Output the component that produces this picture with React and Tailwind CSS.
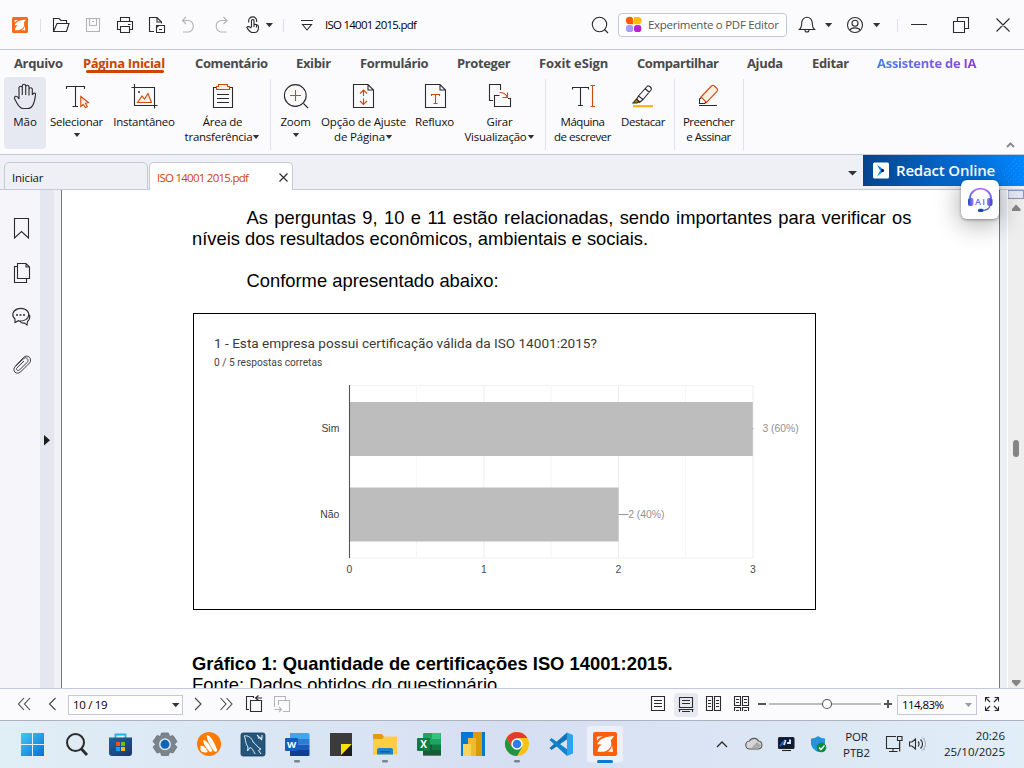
import React from "react";

/* Inline drawing whose box is given as [left, top, right, bottom]. */
function Ico({ b, c = "#2b2b2b", w = 1.1, children }) {
  const [x0, y0, x1, y1] = b;
  return (
    <svg
      className="block shrink-0"
      width={x1 - x0}
      height={y1 - y0}
      viewBox={`${x0} ${y0} ${x1 - x0} ${y1 - y0}`}
      fill="none"
      stroke={c}
      strokeWidth={w}
    >
      {children}
    </svg>
  );
}

const FoxitMark = () => (
  <g fill="#fff" stroke="none">
    <path d="M26 19.800C21 19.800 16 21.500 14.800 25.200L17.800 25.300C16 26.500 15.200 28 15 30.200H18.500C22.800 29.800 25.200 26 23.800 22.600Z" />
    <path d="M24.600 25.800C24.400 28 23.200 29.400 21.600 30.200H25.400Z" />
    <path d="M14.600 20H18.600C16.600 20.600 15.200 21.500 14.600 23Z" />
  </g>
);

function TitleBar() {
  return (
    <header className="flex h-[50px] shrink-0 items-center border-b border-[#c3c9dc]">
      <Ico b={[0, 0, 46, 49]}>
        <rect x="12" y="17" width="16" height="16" rx="1.500" fill="#f76b1c" stroke="none" />
        <FoxitMark />
        <path d="M40.500 19V32" stroke="#dfe1e8" />
      </Ico>
      <Ico b={[46, 0, 78, 49]}>
        <path d="M53.500 31.500V18.500H59L61 20.500H66.500V23.500M53.500 31.500L57 23.500H69L66.500 31.500Z" />
      </Ico>
      <Ico b={[78, 0, 108, 49]} c="#b3b3b3">
        <path d="M86.500 18.500H99.500V31.500H86.500ZM89.500 18.500V25.500H96.500V18.500M94 21.500H92" />
      </Ico>
      <Ico b={[108, 0, 141, 49]}>
        <path d="M120.500 21.500V17.500H129.500V21.500M120.500 29.500H117.500V21.500H132.500V29.500H129.500M120.500 26.500H129.500V32.500H120.500ZM128 24.500H130.500" />
      </Ico>
      <Ico b={[141, 0, 174, 49]}>
        <path d="M154 31.500H149.500V17.500H157L161.500 22V23.500M157 17.500V22H161.500M156.500 25.500H164.500V32.500H156.500ZM156.500 27.500L158.500 25.500M159 29.500H162" />
      </Ico>
      <Ico b={[174, 0, 205, 49]} c="#b3b3b3">
        <path d="M186 17L182.500 20.500L186 24M182.500 20.500H189A6 6 0 0 1 189 32H183" />
      </Ico>
      <Ico b={[205, 0, 237, 49]} c="#b3b3b3">
        <path d="M223.500 17L227 20.500L223.500 24M227 20.500H220.500A6 6 0 0 0 220.500 32H226.500" />
      </Ico>
      <Ico b={[237, 0, 290, 49]}>
        <path d="M251.500 27V20.500A1.300 1.300 0 0 1 254 20.500V24.500C256 24 258.500 25 258.500 27C258.500 29.500 257.500 32.500 254.500 32.500H252C250 32.500 248.500 30 246.800 27.500C247.500 26 249.500 26.500 251.500 28M249 22.500A4 4 0 1 1 256.500 22M254 24.500V27M256.500 25V27.500" />
        <path d="M265.800 23H273L269.400 27.200Z" fill="#333" stroke="none" />
        <path d="M283.500 19V32" stroke="#dfe1e8" />
      </Ico>
      <Ico b={[290, 0, 325, 49]}>
        <path d="M301 20.500H313M302.500 24.500L307 30L311.500 24.500Z" />
      </Ico>
      <span className="w-[260px] whitespace-nowrap text-[11.500px] leading-[16px] tracking-[-0.750px] text-black">ISO 14001 2015.pdf</span>
      <Ico b={[585, 0, 618, 49]}>
        <circle cx="599.500" cy="24.500" r="7.200" />
        <path d="M604.500 29.500L608 33" />
      </Ico>
      <div className="flex h-6 w-[169px] items-center rounded-[4px] border border-[#c3c9dc] bg-white">
        <Ico b={[619, 15, 648, 35]}>
          <path d="M626 20.500A3.500 3.500 0 0 1 633.300 20.500V24.300H629.500A3.700 3.700 0 0 1 626 20.500Z" fill="#ff5a00" stroke="none" />
          <path d="M634 17H638A3.500 3.500 0 0 1 638 24.300H634Z" fill="#ffbc0a" stroke="none" />
          <rect x="626" y="25" width="7.300" height="7" rx="2.800" fill="#a99cff" stroke="none" />
          <rect x="634" y="25" width="7.300" height="7" rx="2.800" fill="#bb22d6" stroke="none" />
        </Ico>
        <span className="whitespace-nowrap text-[11.500px] leading-[16px] tracking-[-0.280px] text-[#555]">Experimente o PDF Editor</span>
      </div>
      <Ico b={[787, 0, 840, 49]}>
        <path d="M799.500 29.500C802 27.500 801.500 25 801.800 22.500A5.200 5.200 0 0 1 812.200 22.500C812.500 25 812 27.500 814.500 29.500ZM805 30A2 2 0 0 0 809 30M807 17.500V16.800" />
        <path d="M825 23H832.200L828.600 27.200Z" fill="#333" stroke="none" />
      </Ico>
      <Ico b={[840, 0, 904, 49]}>
        <circle cx="855" cy="25" r="7.500" />
        <circle cx="855" cy="23.200" r="3" />
        <path d="M850 30.300C851 27 859 27 860 30.300" />
        <path d="M873 23H880.200L876.600 27.200Z" fill="#333" stroke="none" />
        <path d="M897.500 19V32" stroke="#dfe1e8" />
      </Ico>
      <Ico b={[904, 0, 1024, 49]}>
        <path d="M911 24.500H927M953.500 21.500H964.500V32.500H953.500ZM957.500 21.500V17.500H968.500V28.500H964.500M996.500 18.500L1009.500 31.500M1009.500 18.500L996.500 31.500" />
      </Ico>
    </header>
  );
}

const MENU = [
  ["Arquivo", "w-[49px] ml-[14px]"],
  ["Página Inicial", "w-[82px] ml-[20px] text-[#cc4400] tracking-[-0.330px]"],
  ["Comentário", "w-[72px] ml-[30px] tracking-[-0.400px]"],
  ["Exibir", "w-[35px] ml-[29px]"],
  ["Formulário", "w-[68px] ml-[29px] tracking-[-0.400px]"],
  ["Proteger", "w-[53px] ml-[29px] tracking-[-0.400px]"],
  ["Foxit eSign", "w-[69px] ml-[29px] tracking-[-0.100px]"],
  ["Compartilhar", "w-[81px] ml-[29px] tracking-[-0.450px]"],
  ["Ajuda", "w-[36px] ml-[29px]"],
  ["Editar", "w-[36px] ml-[29px]"],
];

function MenuBar() {
  return (
    <nav className="flex h-[27px] shrink-0 text-[13px] font-bold leading-[26px] tracking-[-0.350px] text-[#4a4a4a]">
      {MENU.map(([label, cls], i) => (
        <div key={label} className={`flex shrink-0 flex-col whitespace-nowrap ${cls}`}>
          <span className="h-5">{label}</span>
          {i === 1 && <span className="ml-[3px] h-[3px] w-[78px] rounded-full bg-[#cc4400]" />}
        </div>
      ))}
      <span className="ml-[29px] h-[26px] w-[100px] whitespace-nowrap bg-linear-to-r from-[#3f7df0] to-[#8a3fd8] bg-clip-text tracking-[-0.270px] text-transparent">Assistente de IA</span>
    </nav>
  );
}

function Caret() {
  return (
    <svg className="inline-block" width="8" height="6" viewBox="0 0 8 6">
      <path d="M0.800 1H7.200L4 5Z" fill="#333" />
    </svg>
  );
}

function Tool({ x, cls, l1, l2, caret, active, children }) {
  return (
    <div className={`flex h-[72px] shrink-0 flex-col items-center rounded-[4px] text-[11.500px] leading-[15px] text-[#111] ${active ? "bg-[#e6e9f1]" : ""} ${cls}`}>
      <Ico b={[x[0], 77, x[1], 114]}>{children}</Ico>
      <span className="h-[15px] whitespace-nowrap">{l1}</span>
      <span className={`flex h-[15px] items-center whitespace-nowrap ${l2 ? "" : "-mt-[2px]"}`}>
        {l2}
        {caret && <Caret />}
      </span>
    </div>
  );
}

const Sep = ({ cls }) => <div className={`mt-[2px] h-[71px] w-px shrink-0 bg-[#e0e2ea] ${cls}`} />;

function Ribbon() {
  const o = "#cc4a0a";
  return (
    <div className="flex h-[78px] shrink-0 border-b border-[#c3c9dc]">
      <Tool x={[4, 46]} cls="ml-[4px] w-[42px]" l1="Mão" active>
        <path d="M19 99V87.500A1.700 1.700 0 0 1 22.300 87.500V95M22.300 95V86A1.700 1.700 0 0 1 25.700 86V95M25.700 95V86.500A1.700 1.700 0 0 1 29 86.500V95.500M29 95.500V89A1.700 1.700 0 0 1 32.300 89V95M32.300 95C33 92.500 36 92.500 35.500 95C35 99 34 108.500 28 108.500H23C19 108.500 17 103 14.500 98.500C14 96 17 95 19 99" />
      </Tool>
      <Tool x={[50, 103]} cls="ml-[4px] w-[53px] tracking-[-0.250px]" l1="Selecionar" caret>
        <path d="M66.500 89V86.500H84.500V89M75.500 86.500V106.500M72.500 106.500H78" />
        <path d="M80.800 96.500V106.500L83.300 104.500L85.500 107.700L87.300 106.500L85.500 103.300L88.500 102.500Z" stroke={o} fill="#fdeee4" />
      </Tool>
      <Tool x={[113, 175]} cls="ml-[10px] w-[62px] tracking-[-0.250px]" l1="Instantâneo">
        <path d="M134.500 84V105.500H157.500M131.500 87.500H154.500V108.500" />
        <path d="M137.500 102.500L142 96L144.500 99L148 93.500L151.500 102.500Z" stroke={o} fill="#fdeee4" />
        <circle cx="139" cy="92" r="1" fill="#2b2b2b" stroke="none" />
      </Tool>
      <Tool x={[185, 260]} cls="ml-[10px] w-[75px] tracking-[-0.250px]" l1="Área de" l2="transferência" caret>
        <path d="M216.500 87.500H213.500V107.500H232.500V87.500H229.500M217 94.500H229M217 98.500H229M217 102.500H229" />
        <path d="M216.500 89.500V86.500H218.500V84.500H227.500V86.500H229.500V89.500Z" stroke={o} fill="#fdeee4" />
      </Tool>
      <Sep cls="ml-[10px]" />
      <Tool x={[281, 310]} cls="ml-[10px] w-[29px] tracking-[-0.250px]" l1="Zoom" caret>
        <circle cx="295.300" cy="95.500" r="10.900" />
        <path d="M303.500 103.500L308 108" />
        <path d="M290 95.500H301M295.500 90V101" stroke={o} />
      </Tool>
      <Tool x={[321, 406]} cls="ml-[11px] w-[85px] tracking-[-0.170px]" l1="Opção de Ajuste" l2="de Página" caret>
        <path d="M353.500 84.500H368L373.500 90V107.500H353.500ZM368 84.500V90H373.500" />
        <path d="M363.500 90.500V96M363.500 98.500V104M360 93.500L363.500 90L367 93.500M360 101L363.500 104.500L367 101" stroke={o} />
      </Tool>
      <Tool x={[415, 454]} cls="ml-[9px] w-[39px] tracking-[-0.200px]" l1="Refluxo">
        <path d="M425.500 84.500H440L445.500 90V107.500H425.500ZM440 84.500V90H445.500" />
        <path d="M431.500 96V94.500H439.500V96M435.500 94.500V103.500M433.500 103.500H437.500" stroke={o} />
      </Tool>
      <Tool x={[464, 535]} cls="ml-[10px] w-[71px] tracking-[-0.250px]" l1="Girar" l2="Visualização" caret>
        <path d="M493 100.500H489.500V84.500H500.500V90M499.500 95.500H494.500V106.500H510.500V98.500H508" />
        <path d="M499.500 92.500C503 92.500 506 94 507 97M507.500 92.500V97.500H502.500" stroke={o} />
      </Tool>
      <Sep cls="ml-[10px]" />
      <Tool x={[554, 611]} cls="ml-[8px] w-[57px] tracking-[-0.450px]" l1="Máquina" l2="de escrever">
        <path d="M572.500 89.500V87.500H588.500V89.500M580.500 87.500V105.500M578 105.500H583" />
        <path d="M590.500 85.500H595M592.500 85.500V106.500M590.500 106.500H595" stroke={o} />
      </Tool>
      <Tool x={[621, 665]} cls="ml-[10px] w-[44px] tracking-[-0.450px]" l1="Destacar">
        <path d="M638.500 96L647 86.500C648.500 84.500 652.500 88 651 90L643 99.500ZM638.500 96L636.500 99.500L639.500 102.500L643 99.500M645 88.500L649.500 92.500" />
        <path d="M636.500 99L633 103H637L639.200 101.500Z" fill="#b87a18" />
        <path d="M633 106.200H653" stroke="#fbad0f" strokeWidth="2" />
      </Tool>
      <Sep cls="ml-[9px]" />
      <Tool x={[683, 734]} cls="ml-[8px] w-[51px] tracking-[-0.450px]" l1="Preencher" l2="e Assinar">
        <path d="M701.500 97.500L699.500 99V103.500H704.500L706.500 102M699 105.500H717" />
        <path d="M701 97L711.500 86C713 84.500 714 85.300 717 88.500C718 89.500 717.800 90.500 717 91.500L706.500 102.500Z" stroke={o} fill="#fdeee4" />
      </Tool>
      <Sep cls="ml-[9px]" />
      <div className="flex flex-1 items-end justify-end">
        <Ico b={[1000, 137, 1024, 154]} c="#8a8a8a" w={2}>
          <path d="M1007 147L1010.500 143.500L1014 147" />
        </Ico>
      </div>
    </div>
  );
}

function TabStrip() {
  return (
    <div className="relative flex h-[35px] shrink-0 items-end bg-[#eff0f5]">
      <div className="h-[35px] w-[4px] border-b border-[#c3c9dc]" />
      <div className="flex h-[28px] w-[144px] items-center rounded-t-[5px] border border-[#c3c9dc] pl-[7px] pt-1 text-[11.500px] leading-4 tracking-[-0.200px] text-[#111]">Iniciar</div>
      <div className="h-px w-px bg-[#c3c9dc]" />
      <div className="flex h-[28px] w-[144px] items-center justify-between rounded-t-[5px] border border-b-0 border-[#c3c9dc] bg-white pl-[7px] pt-1 text-[11.500px] leading-4 text-[#cc4400]">
        <span className="-mt-px tracking-[-0.750px]">ISO 14001 2015.pdf</span>
        <Ico b={[276, 170, 292, 188]}>
          <path d="M279.500 173.500L287.500 181.500M287.500 173.500L279.500 181.500" />
        </Ico>
      </div>
      <div className="flex h-[35px] flex-1 justify-end border-b border-[#c3c9dc]">
        <Ico b={[843, 155, 863, 189]}>
          <path d="M848 171H857L852.500 175.500Z" fill="#333" stroke="none" />
        </Ico>
        <div className="flex h-[31px] w-[161px] items-center bg-linear-to-r from-[#04448d] to-[#0086ff]">
          <Ico b={[863, 155, 896, 186]}>
            <rect x="873" y="162.500" width="16" height="16" rx="1.500" fill="#fff" stroke="none" />
            <path d="M877 164.500L884.500 170.500H880Z" fill="#0a7cf5" stroke="none" />
            <path d="M880 170.500H884.500L877 176.500Z" fill="#0b9bf5" stroke="none" />
            <circle cx="882.500" cy="170.500" r="1.500" fill="#111" stroke="none" />
          </Ico>
          <span className="w-[104px] whitespace-nowrap text-[15px] font-semibold tracking-[-0.180px] text-white">Redact Online</span>
          <Ico b={[1000, 155, 1024, 186]} c="#4db0ff" w={0.8}>
            <g strokeDasharray="1 2.500" opacity="0.800">
              <path d="M1004 176L1024 156M1006 179L1024 161M1008 182L1024 166M1013 182L1024 171M1018 182L1024 176M1003 172L1016 159" />
            </g>
          </Ico>
        </div>
      </div>
      <div className="absolute right-[25px] top-[25px] z-10 flex h-[39px] w-[38px] items-center justify-center rounded-[6px] bg-white shadow-[0_4px_24px_2px_rgba(0,0,0,0.300),0_1px_3px_0px_rgba(0,0,0,0.350)]">
        <svg width="26" height="28" viewBox="968 186 26 28" fill="none">
          <defs>
            <linearGradient id="arc" x1="0" y1="0" x2="0" y2="1">
              <stop offset="0" stopColor="#b86cf8" />
              <stop offset="1" stopColor="#4a6be8" />
            </linearGradient>
            <linearGradient id="ear" x1="0" y1="0" x2="1" y2="0">
              <stop offset="0" stopColor="#1d49c4" />
              <stop offset="1" stopColor="#a877fb" />
            </linearGradient>
            <linearGradient id="ear2" x1="1" y1="0" x2="0" y2="0">
              <stop offset="0" stopColor="#1d49c4" />
              <stop offset="1" stopColor="#a877fb" />
            </linearGradient>
          </defs>
          <path d="M971 198C972 185.500 991 185.500 992 198" stroke="url(#arc)" strokeWidth="1.900" />
          <rect x="969" y="198" width="5.500" height="8" rx="2" fill="url(#ear)" />
          <rect x="988" y="198" width="5.500" height="8" rx="2" fill="url(#ear2)" />
          <path d="M991 206C990 209 987 210.500 983 210.500" stroke="#3a62d6" strokeWidth="1.200" />
          <rect x="979" y="208.800" width="5.500" height="3.200" rx="1.500" fill="#1749b8" />
          <text x="976" y="205" fontFamily="Open Sans, sans-serif" fontSize="9" fontWeight="600" letterSpacing="1.300" fill="#6a63ee">AI</text>
        </svg>
      </div>
    </div>
  );
}

function Chart() {
  const t = { fontFamily: "Liberation Sans, Arial, sans-serif", fontSize: 10.4, stroke: "none" };
  return (
    <Ico b={[194, 369, 815, 608]}>
      <path d="M416.500 385V558M551 385V558M685.500 385V558" stroke="#f6f6f6" />
      <path d="M483.900 385V558M618.400 385V558M349.500 385.500H753M349.500 558H753M753 385V558.500" stroke="#efefef" />
      <rect x="350" y="402" width="402.800" height="54" fill="#bdbdbd" stroke="none" />
      <rect x="350" y="487.500" width="268.600" height="54" fill="#bdbdbd" stroke="none" />
      <path d="M349.500 385V558" stroke="#555" />
      <path d="M618.500 514.500H628.500" stroke="#999" />
      <path d="M752.500 428.700H753.500" stroke="#999" />
      <g {...t} fill="#3c3c3c" textAnchor="end">
        <text x="339.300" y="432.200">Sim</text>
        <text x="339.300" y="518.200">Não</text>
      </g>
      <g {...t} fill="#929292">
        <text x="762.400" y="432.200">3 (60%)</text>
        <text x="628.200" y="518">2 (40%)</text>
      </g>
      <g {...t} fill="#4a4a4a" textAnchor="middle">
        <text x="349.500" y="572.800">0</text>
        <text x="483.900" y="572.800">1</text>
        <text x="618.400" y="572.800">2</text>
        <text x="752.800" y="572.800">3</text>
      </g>
    </Ico>
  );
}

function Sidebar() {
  return (
    <aside className="flex w-[61px] shrink-0 bg-[#f0f1f5]">
      <div className="w-[40px] bg-[#f5f5fa]">
        <Ico b={[0, 190, 40, 250]}>
          <path d="M14.500 218.500H28.500V238L21.500 231.500L14.500 238Z" />
        </Ico>
        <Ico b={[0, 250, 40, 295]}>
          <path d="M17.500 263.500H26L29.500 267V278.500H17.500ZM26 263.500V267H29.500M17.500 266.500H14.500V282.500H26.500V278.500" />
        </Ico>
        <Ico b={[0, 295, 40, 340]}>
          <path d="M15 322.500L15 319A8 6.300 0 1 1 18.500 320.700ZM28.500 313.500C31 316.500 29.500 320 27.500 321.500L27 325L24.500 323C22 323.500 20.500 322.500 19.500 321" />
          <path d="M16 315H18M19.500 315H21.500M23 315H25" strokeWidth="1.600" />
        </Ico>
        <Ico b={[0, 340, 40, 400]} c="#3a3a3a" w={1}>
          <path d="M15.500 366L23.500 357.500C27.500 353.500 33 359 29.500 363L20.500 372C16.500 375.500 11.500 370.500 15.200 366.500L23.800 358.500C26.500 356.500 29.500 360 27.200 362.300L19.500 370C17.500 371.500 15.500 369.500 17 367.800L24 361" />
        </Ico>
      </div>
      <div className="flex w-[14px] bg-[#e4e7f0]">
        <Ico b={[40, 190, 54, 460]}>
          <path d="M44 435V445.500L50 440.200Z" fill="#1c1c1c" stroke="none" />
        </Ico>
      </div>
    </aside>
  );
}

function Document() {
  return (
    <main className="flex min-h-0 flex-1 bg-white">
      <Sidebar />
      <div className="h-full w-[939px] shrink-0 overflow-hidden border-x border-[#777] bg-white pl-[130px] font-['Liberation_Sans',Arial,sans-serif] text-[18.370px] leading-[21px] text-black">
        <p className="mt-[17px] w-[719.500px] indent-[54.500px] text-justify">
          As perguntas 9, 10 e 11 estão relacionadas, sendo importantes para verificar os níveis dos resultados econômicos, ambientais e sociais.
        </p>
        <p className="mt-[21px] indent-[54.500px]">Conforme apresentado abaixo:</p>
        <figure className="ml-[1px] mt-[22px] flex h-[297px] w-[623px] flex-col border border-black">
          <div className="flex h-[55px] flex-col pl-[20px] pt-[20px] font-['Roboto',sans-serif]">
            <span className="h-[21px] text-[13.600px] leading-[19px] text-[#3a3a3a]">1 - Esta empresa possui certificação válida da ISO 14001:2015?</span>
            <span className="h-[14px] text-[10.200px] leading-[16px] text-[#444]">0 / 5 respostas corretas</span>
          </div>
          <Chart />
        </figure>
        <p className="mt-[43px] font-bold">Gráfico 1: Quantidade de certificações ISO 14001:2015.</p>
        <p>Fonte: Dados obtidos do questionário.</p>
      </div>
      <div className="w-[7px] bg-[#eeeff5]" />
      <div className="flex w-[17px] flex-col border-l border-white bg-[#eeeeee]">
        <Ico b={[1008, 190, 1024, 688]}>
          <rect x="1008" y="190.500" width="15.500" height="8" fill="#e6e9f4" stroke="#8d97b4" />
          <path d="M1012 211V209L1016 204.500L1020.500 209V211Z" fill="#858585" stroke="none" />
          <rect x="1013" y="440" width="6" height="17" rx="3" fill="#858585" stroke="none" />
          <path d="M1012 680H1020.500V682L1016.200 686.500L1012 682Z" fill="#858585" stroke="none" />
        </Ico>
      </div>
    </main>
  );
}

function StatusBar() {
  return (
    <footer className="flex h-[33px] shrink-0 items-center border-b border-t border-b-[#aeb2be] border-t-[#c3c9dc] bg-[#fbfafd] text-[12px] leading-4 text-black">
      <Ico b={[0, 689, 68, 720]} c="#444">
        <path d="M24 698L18.500 704L24 710M30 698L24.500 704L30 710M55.500 698L49.500 704L55.500 710" />
      </Ico>
      <div className="flex h-5 w-[115px] items-center justify-between border border-[#c3c9dc] bg-white pl-1">
        <span className="text-[11.500px] tracking-[-0.300px]">10 / 19</span>
        <Ico b={[168, 696, 182, 712]}>
          <path d="M172 702H179.500L175.700 706.200Z" fill="#333" stroke="none" />
        </Ico>
      </div>
      <Ico b={[183, 689, 240, 720]} c="#444">
        <path d="M195 698L201 704L195 710M220.500 698L226 704L220.500 710M226.500 698L232 704L226.500 710" />
      </Ico>
      <Ico b={[240, 689, 268, 720]}>
        <path d="M249 709.500H246.500V696.500H253.500V698M250.500 700.500H261.500V711.500H250.500ZM262 698H255.500M258.500 695.500L255.500 698L258.500 700.500" />
      </Ico>
      <Ico b={[268, 689, 300, 720]} c="#b5b5b5">
        <path d="M274.500 707V696.500H285.500V700.500M278.500 705V700.500H289.500V711.500H283M274.500 709.500H281.500M279 707L281.500 709.500L279 712" />
      </Ico>
      <div className="flex-1" />
      <Ico b={[640, 689, 674, 720]}>
        <path d="M651.500 696.500H664.500V710.500H651.500ZM654 700.500H662M654 703.500H662M654 706.500H662" />
      </Ico>
      <div className="rounded-[4px] bg-[#e6e9f1]">
        <Ico b={[674, 692, 698, 716]}>
          <path d="M679.500 696.500H692.500V706.500H679.500ZM682 699.500H690M682 702.500H690M678.500 708.500H693.500M679.500 711V708.500M692.500 711V708.500M682 710.500H690" />
        </Ico>
      </div>
      <Ico b={[698, 689, 756, 720]}>
        <path d="M706.500 696.500H712.500V710.500H706.500ZM714.500 696.500H720.500V710.500H714.500ZM708 700.500H711M708 703.500H711M708 706.500H711M716 700.500H719M716 703.500H719M716 706.500H719" />
        <path d="M734.500 696.500H740.500V705.500H734.500ZM742.500 696.500H748.500V705.500H742.500ZM736 699.500H739M736 702.500H739M744 699.500H747M744 702.500H747M734.500 711V707.500H740.500V711M742.500 711V707.500H748.500V711M736 710.500H739M744 710.500H747" />
      </Ico>
      <Ico b={[756, 689, 897, 720]}>
        <path d="M758 704H766M884 704H892M888 700V708" stroke="#555" strokeWidth="2" />
        <path d="M769 704H881" stroke="#bcbcbc" strokeWidth="2" />
        <circle cx="827" cy="704" r="4.500" fill="#fff" stroke="#555" />
      </Ico>
      <div className="flex h-5 w-[80px] items-center justify-between border border-[#c3c9dc] bg-[#fbfafd] pl-1">
        <span className="text-[11.500px] tracking-[-0.550px]">114,83%</span>
        <Ico b={[960, 696, 976, 712]}>
          <path d="M965 702H972L968.500 706Z" fill="#9a9a9a" stroke="none" />
        </Ico>
      </div>
      <Ico b={[977, 689, 1024, 720]} w={1.1}>
        <path d="M990 702L986 698M985.500 701.500V697.500H989.500M994 702L998 698M998.500 701.500V697.500H994.500M990 706L986 710M985.500 706.500V710.500H989.500M994 706L998 710M998.500 706.500V710.500H994.500" />
      </Ico>
    </footer>
  );
}

function Taskbar() {
  return (
    <div className="flex h-[47px] shrink-0 bg-linear-to-r from-[#e0eef6] via-[#d6dff2] to-[#e1edf7] text-[11.500px] leading-4 text-[#1a1a1a]">
      <Ico b={[0, 721, 55, 768]}>
        <defs>
          <linearGradient id="win" x1="0" y1="0" x2="1" y2="1">
            <stop offset="0" stopColor="#44c8f8" />
            <stop offset="1" stopColor="#0a6fd0" />
          </linearGradient>
        </defs>
        <path d="M21 733H32V744H21ZM33 733H44V744H33ZM21 745H32V756H21ZM33 745H44V756H33Z" fill="url(#win)" stroke="none" />
      </Ico>
      <Ico b={[55, 721, 98, 768]} w={2}>
        <circle cx="75.500" cy="742.500" r="8.500" />
        <path d="M81.500 749L87 755" strokeWidth="2.800" />
      </Ico>
      <Ico b={[98, 721, 142, 768]}>
        <defs>
          <linearGradient id="bag" x1="0" y1="0" x2="1" y2="1">
            <stop offset="0" stopColor="#1a66a8" />
            <stop offset="1" stopColor="#1d3566" />
          </linearGradient>
        </defs>
        <path d="M115.500 738V734.500H125.500V738" stroke="#1cb4f0" strokeWidth="1.800" />
        <path d="M109 737.500H132V753A3 3 0 0 1 129 756H112A3 3 0 0 1 109 753Z" fill="url(#bag)" stroke="none" />
        <path d="M116 742H120V746H116Z" fill="#f25022" stroke="none" />
        <path d="M121 742H125V746H121Z" fill="#7fba00" stroke="none" />
        <path d="M116 747H120V751H116Z" fill="#00a4ef" stroke="none" />
        <path d="M121 747H125V751H121Z" fill="#ffb900" stroke="none" />
      </Ico>
      <Ico b={[142, 721, 187, 768]}>
        <path d="M161.500 733H168.500L169.500 736.500L173 735.500L177 741.500L174.500 744.300L177 747L173 753L169.500 752L168.500 755.500H161.500L160.500 752L157 753L153 747L155.500 744.300L153 741.500L157 735.500L160.500 736.500Z" fill="#7b848a" stroke="#6a7277" strokeWidth="0.800" strokeLinejoin="round" />
        <circle cx="165" cy="744.300" r="5.200" fill="#0a66b8" stroke="#dce6f2" strokeWidth="1.500" />
      </Ico>
      <Ico b={[187, 721, 231, 768]}>
        <circle cx="209" cy="744" r="12" fill="#ff7a00" stroke="none" />
        <path d="M206.500 735.500C209 734.500 213 739 217 749.500C217.500 752 215 752.500 213.500 750.500C210 745.500 207 740.500 206.500 735.500ZM203 740.500C205.500 739.500 209.500 744 212.200 750.500C212.200 752 210 752.500 209 751C206 747.500 203.500 744.500 203 740.500ZM200.500 746C203 745 206 748 207.700 751.500C207 753 202 753 200.500 750Z" fill="#fff" stroke="none" />
      </Ico>
      <Ico b={[231, 721, 275, 768]}>
        <rect x="241" y="733" width="24" height="23" rx="2" fill="#24557a" stroke="#163f5e" strokeWidth="0.800" />
        <path d="M244 736C248 735 252 738 253 742C256 744 258 748 261 749L258.500 750.500L261 754M244 736C246 738 244.500 742 248 747L247.500 751L250 747.500C252 748 253 750 255 754" stroke="#e6eef5" strokeWidth="1" />
        <path d="M257 735L262 740M262 735V738H258" stroke="#e6eef5" />
      </Ico>
      <Ico b={[275, 721, 319, 768]}>
        <path d="M290 733H308A1.500 1.500 0 0 1 309.500 734.500V739H290Z" fill="#41a5ee" stroke="none" />
        <path d="M290 739H309.500V744.500H290Z" fill="#2b7cd3" stroke="none" />
        <path d="M290 744.500H309.500V750H290Z" fill="#185abd" stroke="none" />
        <path d="M290 750H309.500V755A1 1 0 0 1 308.500 756H290Z" fill="#103f91" stroke="none" />
        <rect x="285" y="738" width="13" height="13" rx="1" fill="#185abd" stroke="none" />
        <text x="291.500" y="748" textAnchor="middle" fontFamily="Open Sans, sans-serif" fontSize="9.500" fontWeight="700" fill="#fff" stroke="none">W</text>
        <rect x="294" y="760" width="6" height="2.500" rx="1.200" fill="#7b8492" stroke="none" />
      </Ico>
      <Ico b={[319, 721, 363, 768]}>
        <rect x="330" y="733" width="22" height="23" fill="#3b3b3b" stroke="none" />
        <path d="M341 744H352L341 755Z" fill="#ffe100" stroke="none" />
        <path d="M352 744V756H341Z" fill="#1c1c1c" stroke="none" />
      </Ico>
      <Ico b={[363, 721, 407, 768]}>
        <path d="M373 734H382L384 737H397V745H373Z" fill="#e09b14" stroke="none" />
        <path d="M373 739H382L384.500 736.500H397V754.500H373Z" fill="#ffce44" stroke="none" />
        <path d="M377 754.500V750A2 2 0 0 1 379 748H391A2 2 0 0 1 393 750V754.500Z" fill="#1d83cf" stroke="none" />
        <path d="M380 751.800H390" stroke="#0b5590" />
        <rect x="382" y="760" width="6" height="2.500" rx="1.200" fill="#7b8492" stroke="none" />
      </Ico>
      <Ico b={[407, 721, 451, 768]}>
        <rect x="423" y="733" width="18" height="22.500" rx="1" fill="#21a366" stroke="none" />
        <path d="M432 733H440.500V739H432Z" fill="#33c481" stroke="none" />
        <path d="M423 744.500H432V755.500H423ZM423 750H441V755.500H423Z" fill="#185c37" stroke="none" />
        <path d="M432 744.500H441V750H432Z" fill="#107c41" stroke="none" />
        <rect x="417" y="738" width="13" height="13" rx="1" fill="#107c41" stroke="none" />
        <text x="423.500" y="748.200" textAnchor="middle" fontFamily="Open Sans, sans-serif" fontSize="10" fontWeight="700" fill="#fff" stroke="none">X</text>
      </Ico>
      <Ico b={[451, 721, 495, 768]}>
        <rect x="461" y="732" width="24" height="24" fill="#0078d4" stroke="none" />
        <path d="M473 732H482V756H473Z" fill="#d99a0b" stroke="none" />
        <path d="M468 738H476V756H468Z" fill="#efbb2b" stroke="none" />
        <path d="M463 744H471V756H463Z" fill="#f6d35a" stroke="none" />
      </Ico>
      <Ico b={[495, 721, 539, 768]}>
        <circle cx="517" cy="744" r="12" fill="#fbc116" stroke="none" />
        <path d="M506.600 738A12 12 0 0 1 527.400 738H517L511.800 747Z" fill="#e33b2e" stroke="none" />
        <path d="M506.600 738A12 12 0 0 0 517 756L522.200 747L511.800 747Z" fill="#229342" stroke="none" />
        <circle cx="517" cy="744" r="5" fill="#2f7bea" stroke="#fff" strokeWidth="1.500" />
        <rect x="514" y="760" width="6" height="2.500" rx="1.200" fill="#7b8492" stroke="none" />
      </Ico>
      <Ico b={[539, 721, 585, 768]}>
        <path d="M567 732.500L549.500 748L551.500 750L567.500 739Z" fill="#1273b8" stroke="none" />
        <path d="M549.500 740L551.500 738L567.500 749.500L567 756Z" fill="#1283cb" stroke="none" />
        <path d="M567 732.500L573 735V753.500L567 756Z" fill="#2ba4ee" stroke="none" />
      </Ico>
      <Ico b={[585, 721, 630, 768]}>
        <rect x="586.500" y="725.500" width="37" height="37.500" rx="4" fill="#ebeffa" stroke="#dde3f1" />
        <rect x="593" y="732" width="24" height="24" rx="2" fill="#ff5f0a" stroke="none" />
        <g transform="translate(575 706.500) scale(1.500)">
          <FoxitMark />
        </g>
        <rect x="597" y="760" width="16" height="3" rx="1.500" fill="#0a78d4" stroke="none" />
      </Ico>
      <div className="flex-1" />
      <Ico b={[705, 721, 736, 768]}>
        <path d="M717 747L722 742L727 747" strokeWidth="1.300" />
      </Ico>
      <Ico b={[736, 721, 770, 768]}>
        <path d="M750 749A4 4 0 0 1 749.500 741C751 737.500 757 737.500 758.500 741C763 741.500 763 748.500 758.500 749Z" fill="#d5d5d5" stroke="#555" />
        <path d="M751 748.500L757 742L761 745.500L758.500 748.500Z" fill="#aaa" stroke="none" />
      </Ico>
      <Ico b={[770, 721, 803, 768]}>
        <rect x="778.500" y="737.500" width="15.500" height="11" rx="1" fill="#0c1a3d" stroke="#222" />
        <path d="M784 745L785.500 740M787 743H790V739.500" stroke="#cfe3ff" strokeWidth="2" />
        <path d="M780 746L784 741" stroke="#1a66d0" strokeWidth="2" />
        <path d="M782 750.500H791" stroke="#222" />
      </Ico>
      <Ico b={[803, 721, 839, 768]}>
        <path d="M811 738.500C814 738.500 816.500 737.500 818 736C820 737.500 822 738.500 825 738.500V743C825 747 822 750 818 752C814 750 811 747 811 743Z" fill="#2492dc" stroke="none" />
        <circle cx="821.500" cy="747.500" r="4.800" fill="#11893b" stroke="none" />
        <path d="M819 747.500L821 749.500L824.500 745.500" stroke="#fff" strokeWidth="1.300" />
      </Ico>
      <div className="flex w-[35px] flex-col items-center pt-[8px] tracking-[-0.100px]">
        <span>POR</span>
        <span>PTB2</span>
      </div>
      <Ico b={[874, 721, 930, 768]}>
        <path d="M896 736.500H886.500V748.500H899.500V743M893 748.500V751.500M889 751.500H897.500M897.500 736.500H902V740.500H897.500ZM899.700 740.500V751.500" />
        <path d="M909.500 742V746H912L915.500 749V739L912 742ZM918 741.500A3.500 3.500 0 0 1 918 746.500M920.500 739.500A6 6 0 0 1 920.500 748.500" />
        <path d="M922.500 737.500A8.500 8.500 0 0 1 922.500 750.500" stroke="#aab3c0" />
      </Ico>
      <div className="flex w-[94px] flex-col items-end whitespace-nowrap pr-[19px] pt-[7px]">
        <span>20:26</span>
        <span>25/10/2025</span>
      </div>
    </div>
  );
}

export default function App() {
  return (
    <div className="flex h-[768px] w-[1024px] flex-col overflow-hidden bg-[#fbfafd] font-['Open_Sans','Noto_Sans',sans-serif]">
      <TitleBar />
      <MenuBar />
      <Ribbon />
      <TabStrip />
      <Document />
      <StatusBar />
      <Taskbar />
    </div>
  );
}
